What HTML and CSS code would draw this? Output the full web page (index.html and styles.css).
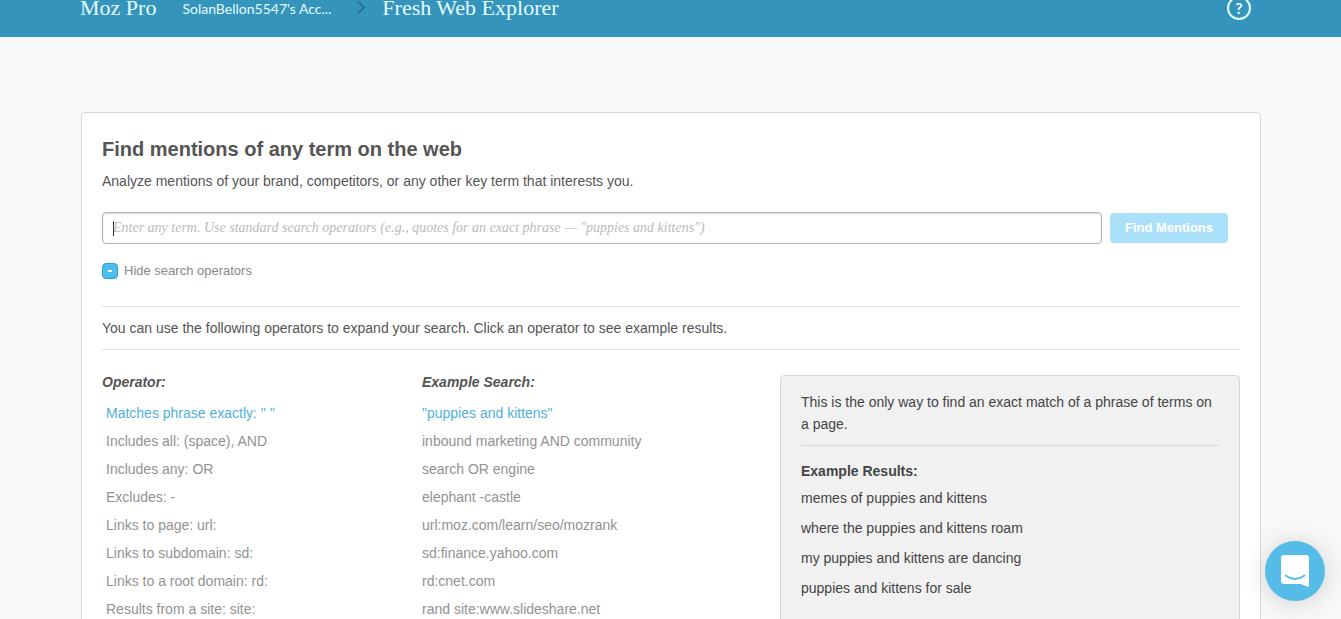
FILE: index.html
```html
<!DOCTYPE html>
<html lang="en">
<head>
    <meta charset="UTF-8">
    <meta name="viewport" content="width=device-width, initial-scale=1.0">
    <title>Fresh Web Explorer</title>
    <link rel="stylesheet" href="styles.css">
</head>
<body>
    <header class="topbar">
        <a class="brand" href="#">Moz Pro</a>
        <a class="account" href="#">SolanBellon5547's Acc...</a>
        <svg class="chevron" viewBox="0 0 10 16" aria-hidden="true">
            <path d="M2 1.500 L8 7.500 L2 13.500" fill="none" stroke="#217599" stroke-width="2"/>
        </svg>
        <a class="product" href="#">Fresh Web Explorer</a>
        <a class="help" href="#" aria-label="Help">?</a>
    </header>

    <main class="card">
        <h1>Find mentions of any term on the web</h1>
        <p class="intro">Analyze mentions of your brand, competitors, or any other key term that interests you.</p>

        <form class="search">
            <div class="search-field">
                <input type="text" class="search-input" aria-label="Search term"
                    placeholder="Enter any term. Use standard search operators (e.g., quotes for an exact phrase — &quot;puppies and kittens&quot;)">
            </div>
            <button type="submit" class="search-button">Find Mentions</button>
        </form>

        <button type="button" class="toggle"><span class="toggle-icon"></span>Hide search operators</button>

        <p class="hint">You can use the following operators to expand your search. Click an operator to see example results.</p>

        <div class="columns">
            <table class="operators">
                <thead>
                    <tr><th>Operator:</th><th>Example Search:</th></tr>
                </thead>
                <tbody>
                    <tr class="active"><td><a href="#">Matches phrase exactly: " "</a></td><td>"puppies and kittens"</td></tr>
                    <tr><td><a href="#">Includes all: (space), AND</a></td><td>inbound marketing AND community</td></tr>
                    <tr><td><a href="#">Includes any: OR</a></td><td>search OR engine</td></tr>
                    <tr><td><a href="#">Excludes: -</a></td><td>elephant -castle</td></tr>
                    <tr><td><a href="#">Links to page: url:</a></td><td>url:moz.com/learn/seo/mozrank</td></tr>
                    <tr><td><a href="#">Links to subdomain: sd:</a></td><td>sd:finance.yahoo.com</td></tr>
                    <tr><td><a href="#">Links to a root domain: rd:</a></td><td>rd:cnet.com</td></tr>
                    <tr><td><a href="#">Results from a site: site:</a></td><td>rand site:www.slideshare.net</td></tr>
                </tbody>
            </table>

            <aside class="results">
                <p class="results-text">This is the only way to find an exact match of a phrase of terms on a page.</p>
                <h2>Example Results:</h2>
                <ul>
                    <li>memes of puppies and kittens</li>
                    <li>where the puppies and kittens roam</li>
                    <li>my puppies and kittens are dancing</li>
                    <li>puppies and kittens for sale</li>
                </ul>
            </aside>
        </div>
    </main>

    <button type="button" class="chat" aria-label="Open chat">
        <svg viewBox="0 0 28 32" aria-hidden="true">
            <path d="M3 0 H25 Q28 0 28 3 V32 Q24 31 20 29 H3 Q0 29 0 26 V3 Q0 0 3 0 Z" fill="#fff"/>
            <path d="M4.500 20.500 Q14 27.500 23.500 20.500" fill="none" stroke="#55bce7" stroke-width="1.800" stroke-linecap="round"/>
        </svg>
    </button>
</body>
</html>
```

FILE: styles.css
```css
* {
    box-sizing: border-box;
}
body {
    margin: 0;
    background-color: #f8f8f8;
    color: #555;
    font-family: "Liberation Sans", Arial, sans-serif;
    font-size: 14px;
    line-height: 22px;
}
h1, h2, p, ul {
    margin: 0;
}
a {
    color: inherit;
    text-decoration: none;
}
button {
    border: none;
    padding: 0;
    font: inherit;
    cursor: pointer;
}

/* header */
.topbar {
    display: flex;
    height: 37px;
    padding: 0 90px 0 80px;
    background-color: #3594bb;
    color: #e4fbff;
    line-height: 16px;
}
.brand, .product {
    font-family: "Roboto Slab", "Liberation Serif", serif;
    font-size: 22px;
}
.account {
    margin: 1px 25px 0 26px;
    font-family: Lato, sans-serif;
    font-size: 14px;
}
.chevron {
    width: 10px;
    height: 16px;
    margin-right: 16px;
}
.help {
    width: 24px;
    height: 24px;
    margin: -4px 0 0 auto;
    border: 2px solid #e4fbff;
    border-radius: 50%;
    font-family: Lato, sans-serif;
    font-size: 16px;
    font-weight: bold;
    line-height: 20px;
    text-align: center;
}

/* main card */
.card {
    margin: 75px 80px 40px 81px;
    padding: 24px 20px 20px;
    background-color: #fff;
    border: 1px solid #d9d9d9;
    border-radius: 4px;
}
h1 {
    font-size: 20px;
    line-height: 24px;
}
.intro {
    margin-top: 9px;
}
.search {
    display: flex;
    gap: 8px;
    margin: 20px 12px 0 0;
}
.search-field {
    position: relative;
    flex: 1;
}
/* text cursor */
.search-field::before {
    content: "";
    position: absolute;
    top: 9px;
    left: 11px;
    width: 1px;
    height: 15px;
    background-color: #333;
}
.search-input {
    display: block;
    width: 100%;
    height: 32px;
    padding: 0 10px;
    border: 1px solid #b5b5b5;
    border-radius: 4px;
    box-shadow: inset 0 1px 2px #ddd;
    outline: none;
    font-family: "Liberation Serif", serif;
    font-size: 14px;
}
.search-input::placeholder {
    color: #bbb;
    font-style: italic;
}
.search-button {
    width: 118px;
    height: 30px;
    margin-top: 1px;
    border-radius: 4px;
    background-color: #abe1f8;
    color: #fff;
    font-size: 13px;
    font-weight: bold;
}
.toggle {
    display: flex;
    align-items: center;
    gap: 6px;
    margin-top: 16px;
    background: none;
    color: #888;
    font-size: 13px;
}
.toggle-icon {
    display: flex;
    align-items: center;
    justify-content: center;
    width: 16px;
    height: 16px;
    border: 1px solid #2fa0d0;
    border-radius: 4px;
    background-color: #4cbdec;
}
.toggle-icon::before {
    content: "";
    width: 4px;
    height: 2px;
    background-color: #fff;
}
.hint {
    margin-top: 24px;
    padding: 10px 0;
    border-top: 1px solid #e3e3e3;
    border-bottom: 1px solid #e3e3e3;
}
.columns {
    display: flex;
    justify-content: space-between;
    align-items: flex-start;
    margin-top: 25px;
}

/* operators list */
.operators {
    width: 640px;
    margin-top: -4px;
    border-collapse: collapse;
    table-layout: fixed;
    color: #929292;
}
.operators th {
    height: 28px;
    padding: 0 0 6px;
    color: #555;
    font-style: italic;
    text-align: left;
}
.operators td {
    height: 28px;
    padding: 0;
}
.operators td:first-child {
    padding-left: 4px;
}
.operators .active {
    color: #4fb1d9;
}

/* example results */
.results {
    width: 460px;
    min-height: 260px;
    padding: 15px 20px;
    background-color: #f1f1f1;
    border: 1px solid #d6d6d6;
    border-radius: 4px;
    color: #444;
}
.results-text {
    padding-bottom: 10px;
    border-bottom: 1px solid #d6d6d6;
}
h2 {
    margin: 14px 0 1px;
    font-size: 14px;
    line-height: 22px;
}
.results ul {
    padding: 0;
    list-style: none;
}
.results li {
    line-height: 30px;
}

/* chat launcher */
.chat {
    position: fixed;
    right: 16px;
    bottom: 18px;
    display: flex;
    align-items: center;
    justify-content: center;
    width: 60px;
    height: 60px;
    border-radius: 50%;
    background-color: #55bce7;
    box-shadow: 0 2px 24px rgba(0, 0, 0, 0.16);
}
.chat svg {
    width: 28px;
    height: 32px;
}
```
